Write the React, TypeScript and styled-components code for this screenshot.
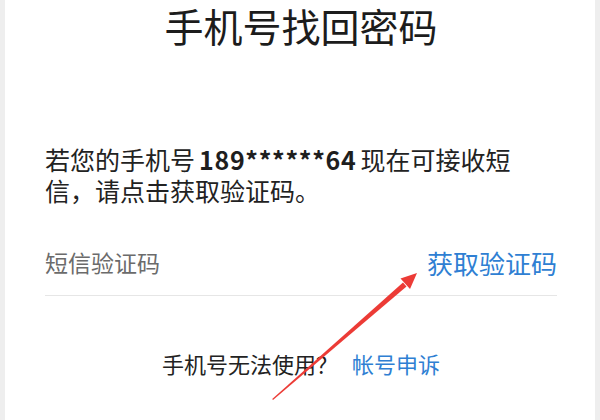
import React from "react";
import styled, { createGlobalStyle } from "styled-components";

const Global = createGlobalStyle`
  html, body {
    margin: 0;
    padding: 0;
    background: #eeeeee;
  }
  body {
    font-family: "Noto Sans CJK SC", "Noto Sans", sans-serif;
    -webkit-font-smoothing: antialiased;
  }
`;

const Screen = styled.div`
  position: relative;
  width: 600px;
  height: 420px;
  overflow: hidden;
  padding: 0 5px;
  box-sizing: border-box;
  background: #eeeeee;
`;

const Panel = styled.main`
  height: 100%;
  background: #ffffff;
  display: flex;
  flex-direction: column;
  padding: 0 38px 0 40px;
`;

const Title = styled.h1`
  margin: 0;
  font-size: 39px;
  line-height: 50px;
  font-weight: 400;
  color: #1c1c1c;
  text-align: center;
  letter-spacing: 0;
`;

const Notice = styled.p`
  margin: 94px 0 0;
  max-width: 500px;
  font-size: 25px;
  line-height: 31px;
  color: #222222;
`;

const Phone = styled.b`
  font-weight: 700;
  color: #1e1e1e;
  padding: 0 4px;
  letter-spacing: 0.7px;
`;

const CodeRow = styled.div`
  margin-top: 31px;
  height: 50px;
  display: flex;
  align-items: center;
  justify-content: space-between;
  border-bottom: 1px solid #e6e6e6;
  padding-bottom: 8px;
`;

const Placeholder = styled.span`
  font-size: 23px;
  color: #6b6b6b;
`;

const LinkText = styled.a<{ $size: number }>`
  font-size: ${(p) => p.$size}px;
  color: #2f7fd3;
  text-decoration: none;
  cursor: pointer;
`;

const Footer = styled.div`
  margin-top: 52px;
  display: flex;
  justify-content: center;
  align-items: center;
  gap: 14px;
  font-size: 22px;
  line-height: 30px;
  color: #222222;
`;

const ArrowLayer = styled.svg`
  position: absolute;
  left: 0;
  top: 0;
  pointer-events: none;
`;

export default function App() {
  return (
    <>
      <Global />
      <Screen>
        <Panel>
          <Title>手机号找回密码</Title>
          <Notice>
            若您的手机号<Phone>189******64</Phone>现在可接收短信，请点击获取验证码。
          </Notice>
          <CodeRow>
            <Placeholder>短信验证码</Placeholder>
            <LinkText $size={26}>获取验证码</LinkText>
          </CodeRow>
          <Footer>
            <span>手机号无法使用？</span>
            <LinkText $size={22}>帐号申诉</LinkText>
          </Footer>
        </Panel>
        <ArrowLayer width="600" height="420" viewBox="0 0 600 420">
          <polygon
            points="273,400 272.2,399 403,282.5 406.5,286.5"
            fill="#ec3b36"
          />
          <polygon points="417,273 400.5,278.5 410,289" fill="#ec3b36" />
        </ArrowLayer>
      </Screen>
    </>
  );
}
